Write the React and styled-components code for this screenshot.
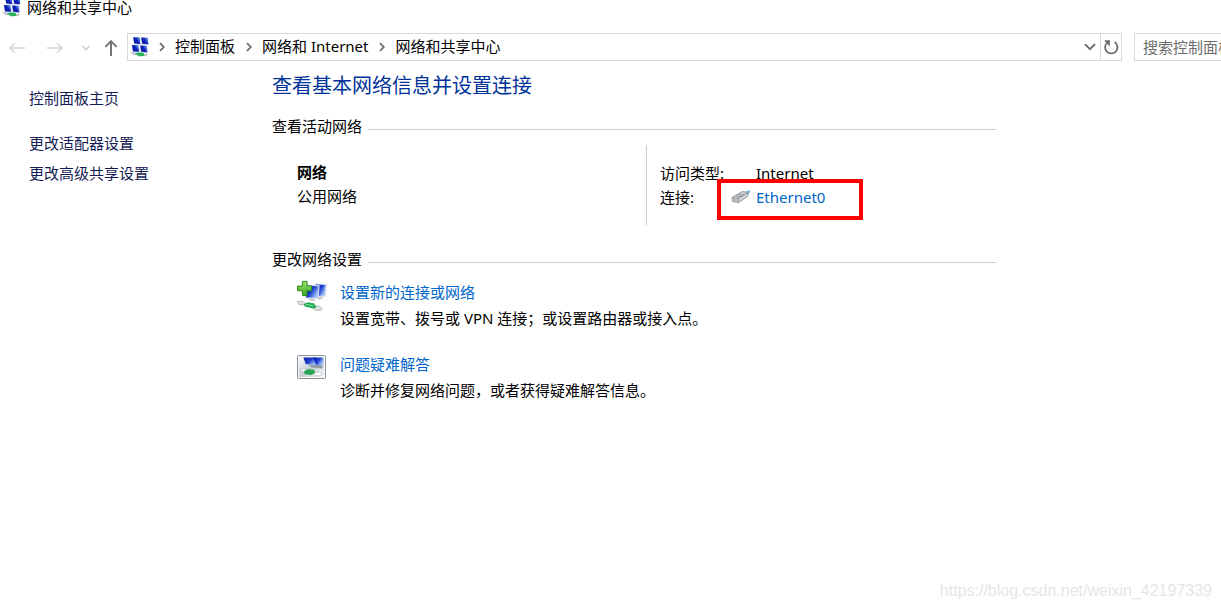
import React from 'react'
import styled, { createGlobalStyle } from 'styled-components'


const crumbs = ['控制面板', '网络和 Internet', '网络和共享中心']

const Screens = ({ x, y }) => (
    <g transform={`translate(${x} ${y})`}>
        <path d="M0 0 7.4 0.6 8.4 8 1 7.6Z" fill="#cdd6ec" />
        <path d="M0.4 0.2 6.4 0.8 7.4 7 1.4 6.6Z" fill="#1020b0" />
        <path d="M3.6 0.5 6.4 0.8 7.4 7Z" fill="#3f6ce2" />
    </g>
)

const NetworkIcon = ({ cropped }) => (
    <svg width="18" height={cropped ? 17 : 20} viewBox={cropped ? '0 3 18 17' : '0 0 18 20'} overflow="visible" aria-hidden="true">
        <Screens x={2.8} y={0} />
        <Screens x={10.8} y={0.2} />
        <Screens x={1.6} y={7.8} />
        <Screens x={9.8} y={8.2} />
        <path d="M0.4 15.2 4 15.2 7 17.6 3 18Z" fill="#c3c8cb" />
        <path d="M13 17.2 16.4 16.4 18 18 14.6 19.6Z" fill="#c3c8cb" />
        <path d="M4.4 16.8 9 15.2 14 16.2 14.4 18.8 10 19.4Z" fill="#27b35a" />
    </svg>
)

const Chevron = () => (
    <svg width="8" height="10" viewBox="0 0 8 10" aria-hidden="true">
        <path d="M2 1.2 5.8 5 2 8.8" fill="none" stroke="#6b6b6b" strokeWidth="1.7" />
    </svg>
)

const EthernetIcon = () => (
    <svg width="20" height="14" viewBox="0 0 20 14" aria-hidden="true">
        <path d="M12 3 17 0.6 19.4 0.4 18 4 15 6Z" fill="#6fb9e2" />
        <path d="M1 7.4 11 1.6 17 2.4 16.6 6.4 7.6 12.6 1.6 11.6Z" fill="#d2d4d5" stroke="#858b90" strokeWidth="0.8" />
        <path d="M1.2 7.6 7.4 8.4 16.8 2.6M7.4 8.4V12.4" fill="none" stroke="#7d8388" strokeWidth="0.8" />
        <path d="M5 6 10.8 6.6M7.4 4.4 13.2 5M3 9V11M5 9.4V11.4" stroke="#7d8388" strokeWidth="0.8" />
    </svg>
)

const NewConnectionIcon = () => (
    <svg width="32" height="32" viewBox="0 0 32 32" aria-hidden="true">
        <defs>
            <linearGradient id="screen" x1="0" y1="0" x2="1" y2="0.6">
                <stop offset="0" stopColor="#0b18a0" />
                <stop offset="0.55" stopColor="#1d3fd0" />
                <stop offset="1" stopColor="#a5c8fb" />
            </linearGradient>
            <linearGradient id="plus" x1="0" y1="0" x2="0" y2="1">
                <stop offset="0" stopColor="#a0e370" />
                <stop offset="1" stopColor="#35a51f" />
            </linearGradient>
        </defs>
        <path d="M19 3.6 31 4 29.8 16.4 20 17.4Z" fill="#cfd8e8" />
        <path d="M19.6 4.6 29.4 5 28.4 15.2 20.6 16Z" fill="url(#screen)" />
        <path d="M8.4 4.6 23.6 5.2 22.6 19 9.4 18.4Z" fill="#dae1ea" />
        <path d="M9.4 5.6 22.4 6.2 21.6 17.8 10.2 17.4Z" fill="url(#screen)" />
        <path d="M13 18.8 18 19 19.6 21 13 20.6Z" fill="#c4c9cd" />
        <path d="M22 17.4 26 17 27 19 22 19.4Z" fill="#c4c9cd" />
        <path d="M1.4 21.6 6 21.2 10 23.4 8 25 3 24.4Z" fill="#e0e2e3" stroke="#9fa5a8" strokeWidth="0.7" />
        <path d="M16.4 27.4 22 25.6 26.4 28.6 24.4 30.4 18.4 30Z" fill="#e0e2e3" stroke="#9fa5a8" strokeWidth="0.7" />
        <path d="M7.4 24.6 12 22.2 18.4 23.4 20.4 27.6 17 28.6 9 26.6Z" fill="#25a956" />
        <path d="M10 24.4 17.4 25.8" stroke="#7ee3a0" />
        <path d="M6.4 1.4H11V6H15.6V10.8H11V15.6H6.4V10.8H1.6V6H6.4Z" fill="url(#plus)" stroke="#2c8a1c" />
    </svg>
)

const TroubleshootIcon = () => (
    <svg width="32" height="29" viewBox="0 0 32 29" aria-hidden="true">
        <defs>
            <linearGradient id="panel" x1="0" y1="0" x2="1" y2="1">
                <stop offset="0" stopColor="#f8fafb" />
                <stop offset="0.5" stopColor="#c3ccd2" />
                <stop offset="1" stopColor="#fff" />
            </linearGradient>
        </defs>
        <rect x="1.5" y="3.5" width="28" height="23" rx="1" fill="#f4f6f7" stroke="#8b9298" />
        <path d="M3 7H28V25H3Z" fill="url(#panel)" />
        <path d="M7.4 5.4 20 5.4 21 12.8 9.8 12.2Z" fill="url(#screen)" />
        <path d="M17 5.4 27 5.4 27 13.6 20 13Z" fill="url(#screen)" />
        <path d="M12 12.4 27 13.6 26 16.4 16 15.4Z" fill="#8f9ba5" />
        <path d="M3.4 17.4 8 16.8 11 18.8 8 20.4Z" fill="#fff" stroke="#a9b0b4" strokeWidth="0.6" />
        <path d="M7.6 19.8 12 17 18.4 18 19 21.4 15 23 9 22.2Z" fill="#22a450" />
        <path d="M17.6 21.6 23 19.8 26.8 22 24 24 19 23.6Z" fill="#fff" stroke="#a9b0b4" strokeWidth="0.6" />
    </svg>
)

const App = () => {
  return (
    <Page>
        <GlobalStyle />
        <TitleBar>
            <NetworkIcon cropped />
            <span>网络和共享中心</span>
        </TitleBar>

        <NavBar>
            <NavButtons>
                <NavButton aria-label="后退" disabled $width={34}>
                    <svg width="16" height="12" viewBox="0 0 16 12"><path d="M6 1 1 6 6 11M1 6H16" fill="none" stroke="#d3d3d3" strokeWidth="1.5" /></svg>
                </NavButton>
                <NavButton aria-label="前进" disabled $width={42}>
                    <svg width="16" height="12" viewBox="0 0 16 12"><path d="M10 1 15 6 10 11M15 6H0" fill="none" stroke="#d3d3d3" strokeWidth="1.5" /></svg>
                </NavButton>
                <NavButton aria-label="最近位置" disabled $width={20}>
                    <svg width="10" height="8" viewBox="0 0 10 8"><path d="M1.4 2 5 5.6 8.6 2" fill="none" stroke="#d0d0d0" strokeWidth="1.5" /></svg>
                </NavButton>
                <NavButton aria-label="上移" $width={30}>
                    <svg width="14" height="16" viewBox="0 0 14 16"><path d="M1.4 6.8 7 1.2 12.6 6.8M7 1.2V16" fill="none" stroke="#707070" strokeWidth="1.9" /></svg>
                </NavButton>
            </NavButtons>
            <AddressBar>
                <NetworkIcon />
                {crumbs.map((name) => (
                    <React.Fragment key={name}>
                        <Separator><Chevron /></Separator>
                        <Crumb href="#">{name}</Crumb>
                    </React.Fragment>
                ))}
                <BarButton aria-label="以前的位置" $push>
                    <svg width="12" height="8" viewBox="0 0 12 8"><path d="M1 1.2 6 6.2 11 1.2" fill="none" stroke="#6b6b6b" strokeWidth="1.9" /></svg>
                </BarButton>
                <BarButton aria-label="刷新" $line>
                    <svg width="16" height="16" viewBox="0 0 16 16"><path d="M11.6 3A6.2 6.2 0 1 1 5 3M1.8 2.2H6V6.4" fill="none" stroke="#6b6b6b" strokeWidth="1.8" /></svg>
                </BarButton>
            </AddressBar>
            <Search type="text" aria-label="搜索控制面板" placeholder="搜索控制面板" />
        </NavBar>

        <Body>
            <Sidebar>
                <SideLink href="#" $first>控制面板主页</SideLink>
                <SideLink href="#">更改适配器设置</SideLink>
                <SideLink href="#">更改高级共享设置</SideLink>
            </Sidebar>

            <Content>
                <Heading>查看基本网络信息并设置连接</Heading>

                <SectionTitle>查看活动网络</SectionTitle>
                <Network>
                    <NetworkName>
                        <strong>网络</strong>
                        <span>公用网络</span>
                    </NetworkName>
                    <Details>
                        <dt>访问类型:</dt>
                        <dd>Internet</dd>
                        <dt>连接:</dt>
                        <dd>
                            <Connection href="#">
                                <EthernetIcon />
                                Ethernet0
                            </Connection>
                        </dd>
                    </Details>
                </Network>

                <SectionTitle>更改网络设置</SectionTitle>
                <Tasks>
                    <Task>
                        <NewConnectionIcon />
                        <div>
                            <TaskLink href="#">设置新的连接或网络</TaskLink>
                            <TaskText>设置宽带、拨号或 VPN 连接；或设置路由器或接入点。</TaskText>
                        </div>
                    </Task>
                    <Task>
                        <TroubleshootIcon />
                        <div>
                            <TaskLink href="#">问题疑难解答</TaskLink>
                            <TaskText>诊断并修复网络问题，或者获得疑难解答信息。</TaskText>
                        </div>
                    </Task>
                </Tasks>
            </Content>
        </Body>

        <Footer>https://blog.csdn.net/weixin_42197339</Footer>
    </Page>
  )
}

const GlobalStyle = createGlobalStyle`
    * {
        box-sizing: border-box;
    }
    body {
        margin: 0;
        background: #fff;
        color: #000;
        font: 15px/24px "Noto Sans", "Noto Sans CJK SC", sans-serif;
    }
    a {
        text-decoration: none;
    }
    svg {
        display: block;
        flex: none;
    }
`

const Page = styled.div`
    display: flex;
    flex-direction: column;
    min-height: 100vh;
`

const TitleBar = styled.header`
    display: flex;
    align-items: flex-start;
    gap: 7px;
    height: 17px;
    padding-left: 2px;
    line-height: 15px;

    svg {
        overflow: hidden;
    }
`

const NavBar = styled.nav`
    display: flex;
    height: 28px;
    margin-top: 16px;
`

const NavButtons = styled.div`
    display: flex;
    align-items: center;
    width: 127px;
    flex: none;
    padding: 2px 0 0 0;
`

const NavButton = styled.button`
    display: flex;
    align-items: center;
    justify-content: center;
    width: ${(props) => props.$width}px;
    height: 26px;
    flex: none;
    padding: 0;
    border: 0;
    background: none;
`

const AddressBar = styled.div`
    display: flex;
    align-items: center;
    flex: 1;
    padding-left: 2px;
    border: 1px solid #d9d9d9;
    line-height: 22px;
    white-space: nowrap;
`

const Separator = styled.span`
    display: flex;
    justify-content: center;
    width: 27px;
`

const Crumb = styled.a`
    padding-bottom: 2px;
    color: #000;
`

const BarButton = styled.button`
    display: flex;
    align-items: center;
    justify-content: center;
    width: 21px;
    height: 100%;
    margin-left: ${(props) => (props.$push ? 'auto' : '0')};
    padding: 0;
    border: 0;
    border-left: ${(props) => (props.$line ? '1px solid #d9d9d9' : '0')};
    background: none;
`

const Search = styled.input`
    width: 87px;
    flex: none;
    margin-left: 12px;
    padding: 0 0 0 8px;
    border: 1px solid #d9d9d9;
    border-right: 0;
    border-radius: 0;
    outline: 0;
    font: inherit;

    &::placeholder {
        color: #6d6d6d;
    }
`

const Body = styled.div`
    display: flex;
`

const Sidebar = styled.aside`
    display: flex;
    flex-direction: column;
    align-items: flex-start;
    gap: 6px;
    width: 272px;
    flex: none;
    padding: 25px 0 0 29px;
`

const SideLink = styled.a`
    margin-bottom: ${(props) => (props.$first ? '15px' : '0')};
    color: #151c55;
`

const Content = styled.main`
    flex: 1;
    margin-right: 225px;
    padding-top: 9px;
`

const Heading = styled.h1`
    margin: 0 0 12px;
    color: #003399;
    font-size: 20px;
    font-weight: 400;
    line-height: 32px;
`

const SectionTitle = styled.h2`
    display: flex;
    align-items: center;
    margin: 0;
    font-size: 15px;
    font-weight: 400;

    &::after {
        content: '';
        flex: 1;
        height: 1px;
        margin: 6px 0 0 6px;
        background: #cbcbcb;
    }
`

const Network = styled.section`
    display: grid;
    grid-template-columns: 374px 1fr;
    margin: 7px 0 22px;
`

const NetworkName = styled.div`
    display: flex;
    flex-direction: column;
    padding: 15px 0 0 25px;
`

const Details = styled.dl`
    display: grid;
    grid-template-columns: 96px 1fr;
    align-content: start;
    height: 80px;
    margin: 0;
    padding: 16px 0 0 13px;
    border-left: 1px solid #cbcbcb;

    dd {
        margin: 0;
    }
`

const Connection = styled.a`
    position: relative;
    display: inline-flex;
    align-items: center;
    gap: 5px;
    margin-left: -25px;
    color: #0066cc;

    &::after {
        content: '';
        position: absolute;
        inset: -6px -38px -11px -14px;
        border: 4px solid #ff0000;
    }
`

const Tasks = styled.div`
    display: flex;
    flex-direction: column;
    gap: 22px;
    padding: 9px 0 0 24px;
`

const Task = styled.div`
    display: flex;
    gap: 12px;
`

const TaskLink = styled.a`
    display: block;
    color: #0066cc;
`

const TaskText = styled.p`
    margin: 2px 0 0;
`

const Footer = styled.footer`
    margin-top: auto;
    padding: 0 9px 6px 0;
    color: #e6e6e6;
    font-family: "Liberation Sans", sans-serif;
    font-size: 16px;
    text-align: right;
`


export default App
